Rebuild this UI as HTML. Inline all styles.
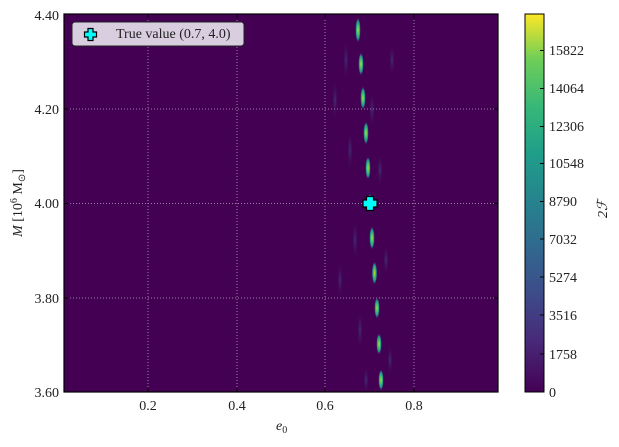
<!DOCTYPE html><html><head><style>body{margin:0;background:#fff}svg text{font-family:"Liberation Serif",serif;font-size:14px;fill:#222}</style></head><body>
<svg width="619" height="442" xmlns="http://www.w3.org/2000/svg">
<defs>
<radialGradient id="b"><stop offset="0" stop-color="#c8e020"/><stop offset="0.35" stop-color="#4ac16d"/><stop offset="0.7" stop-color="#21918c"/><stop offset="1" stop-color="#440154" stop-opacity="0"/></radialGradient>
<radialGradient id="f"><stop offset="0" stop-color="#3b528b" stop-opacity="0.6"/><stop offset="1" stop-color="#440154" stop-opacity="0"/></radialGradient>
<linearGradient id="cb" x1="0" y1="1" x2="0" y2="0"><stop offset="0" stop-color="#440154"/><stop offset="0.13" stop-color="#482878"/><stop offset="0.25" stop-color="#3e4989"/><stop offset="0.38" stop-color="#31688e"/><stop offset="0.5" stop-color="#26828e"/><stop offset="0.63" stop-color="#1f9e89"/><stop offset="0.75" stop-color="#35b779"/><stop offset="0.88" stop-color="#6ece58"/><stop offset="1" stop-color="#fde725"/></linearGradient>
</defs>
<rect x="64" y="14" width="434" height="378" fill="#440154"/>
<g fill="url(#f)">
<ellipse cx="346" cy="60" rx="3" ry="20"/><ellipse cx="372" cy="110" rx="3" ry="18"/><ellipse cx="350" cy="150" rx="3" ry="20"/><ellipse cx="380" cy="170" rx="3" ry="16"/><ellipse cx="355" cy="240" rx="3" ry="20"/><ellipse cx="386" cy="260" rx="3" ry="16"/><ellipse cx="360" cy="330" rx="3" ry="20"/><ellipse cx="390" cy="360" rx="3" ry="16"/><ellipse cx="340" cy="280" rx="3" ry="18"/><ellipse cx="366" cy="380" rx="3" ry="14"/><ellipse cx="335" cy="100" rx="3" ry="20"/><ellipse cx="392" cy="60" rx="3" ry="16"/>
</g>
<g fill="url(#b)">
<ellipse cx="358" cy="30" rx="2.8" ry="13"/><ellipse cx="361" cy="64" rx="2.8" ry="12"/><ellipse cx="363" cy="98" rx="2.8" ry="12"/><ellipse cx="366" cy="133" rx="2.8" ry="12"/><ellipse cx="368" cy="168" rx="2.8" ry="12"/><ellipse cx="370" cy="203" rx="2.8" ry="10"/><ellipse cx="372" cy="238" rx="2.8" ry="12"/><ellipse cx="374.5" cy="273" rx="2.8" ry="12"/><ellipse cx="377" cy="308" rx="2.8" ry="11"/><ellipse cx="379" cy="344" rx="2.8" ry="11"/><ellipse cx="381" cy="380" rx="2.8" ry="11"/>
</g>
<g stroke="#b89cc0" stroke-width="1" stroke-dasharray="1,2" opacity="0.8">
<line x1="148" y1="14" x2="148" y2="392"/><line x1="237" y1="14" x2="237" y2="392"/><line x1="325" y1="14" x2="325" y2="392"/><line x1="414" y1="14" x2="414" y2="392"/>
<line x1="64" y1="109" x2="498" y2="109"/><line x1="64" y1="203.5" x2="498" y2="203.5"/><line x1="64" y1="298" x2="498" y2="298"/>
</g>
<rect x="64" y="14" width="434" height="378" fill="none" stroke="#000" stroke-width="1.2"/>
<g stroke="#000" stroke-width="1"><line x1="148" y1="392" x2="148" y2="388"/><line x1="237" y1="392" x2="237" y2="388"/><line x1="325" y1="392" x2="325" y2="388"/><line x1="414" y1="392" x2="414" y2="388"/><line x1="148" y1="14" x2="148" y2="18"/><line x1="237" y1="14" x2="237" y2="18"/><line x1="325" y1="14" x2="325" y2="18"/><line x1="414" y1="14" x2="414" y2="18"/>
<line x1="64" y1="109" x2="68" y2="109"/><line x1="64" y1="203.5" x2="68" y2="203.5"/><line x1="64" y1="298" x2="68" y2="298"/><line x1="498" y1="109" x2="494" y2="109"/><line x1="498" y1="203.5" x2="494" y2="203.5"/><line x1="498" y1="298" x2="494" y2="298"/></g>
<path d="M366.5 196.5h7v3.5h3.5v7h-3.5v3.5h-7v-3.5h-3.5v-7h3.5z" fill="#00ffff" stroke="#000" stroke-width="1.2"/>
<rect x="72" y="22" width="172" height="24" rx="3" fill="#d9cde0" stroke="#222" stroke-width="1"/>
<path d="M88 28.5h5v3.5h3.5v5h-3.5v3.5h-5v-3.5h-3.5v-5h3.5z" fill="#00ffff" stroke="#000" stroke-width="1.2"/>
<text x="116" y="38">True value (0.7, 4.0)</text>
<g text-anchor="middle"><text x="148" y="410">0.2</text><text x="237" y="410">0.4</text><text x="325" y="410">0.6</text><text x="414" y="410">0.8</text></g>
<text x="276" y="430" font-style="italic">e<tspan font-size="10" dy="3" font-style="normal">0</tspan></text>
<g text-anchor="end"><text x="59" y="20">4.40</text><text x="59" y="114">4.20</text><text x="59" y="208">4.00</text><text x="59" y="303">3.80</text><text x="59" y="397">3.60</text></g>
<text transform="translate(22 203) rotate(-90)" text-anchor="middle"><tspan font-style="italic">M</tspan> [10<tspan font-size="10" dy="-5">6</tspan><tspan dy="5"> M</tspan><tspan font-size="10" dy="3">⊙</tspan><tspan dy="-3">]</tspan></text>
<rect x="525" y="14" width="19" height="378" fill="url(#cb)" stroke="#000" stroke-width="1"/>
<g stroke="#000"><line x1="544" y1="50.5" x2="540" y2="50.5"/><line x1="544" y1="88.5" x2="540" y2="88.5"/><line x1="544" y1="126.5" x2="540" y2="126.5"/><line x1="544" y1="163.5" x2="540" y2="163.5"/><line x1="544" y1="201.5" x2="540" y2="201.5"/><line x1="544" y1="239" x2="540" y2="239"/><line x1="544" y1="277" x2="540" y2="277"/><line x1="544" y1="315" x2="540" y2="315"/><line x1="544" y1="354" x2="540" y2="354"/></g>
<text x="549" y="55">15822</text><text x="549" y="93">14064</text><text x="549" y="131">12306</text><text x="549" y="168">10548</text><text x="549" y="206">8790</text><text x="549" y="244">7032</text><text x="549" y="282">5274</text><text x="549" y="320">3516</text><text x="549" y="359">1758</text><text x="549" y="397">0</text>
<text transform="translate(607 218) rotate(-90)" font-style="italic" font-size="15">2ℱ</text>
</svg></body></html>
